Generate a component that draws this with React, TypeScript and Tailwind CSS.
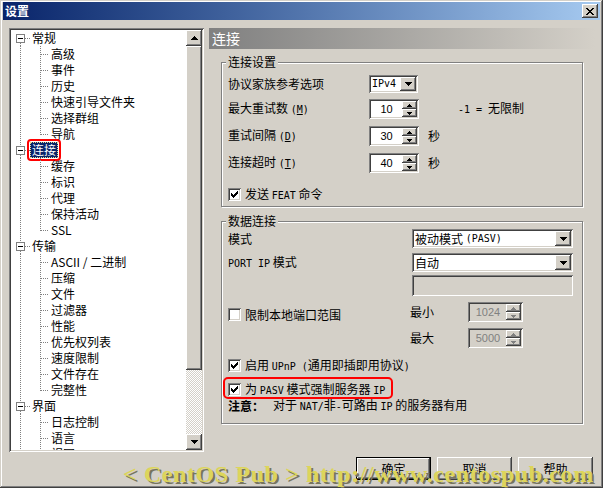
import React from "react";

const raised =
  "shadow-[inset_-1px_-1px_#404040,inset_1px_1px_#fff,inset_-2px_-2px_#808080,inset_2px_2px_#d4d0c8]";
const sunken =
  "shadow-[inset_1px_1px_#808080,inset_-1px_-1px_#fff,inset_2px_2px_#404040,inset_-2px_-2px_#d4d0c8]";

type TreeItem = { label: string; root?: boolean; first?: boolean; last?: boolean; selected?: boolean };

const tree: TreeItem[] = [
  { label: "常规", root: true, first: true },
  { label: "高级" },
  { label: "事件" },
  { label: "历史" },
  { label: "快速引导文件夹" },
  { label: "选择群组" },
  { label: "导航", last: true },
  { label: "连接", root: true, selected: true },
  { label: "缓存" },
  { label: "标识" },
  { label: "代理" },
  { label: "保持活动" },
  { label: "SSL", last: true },
  { label: "传输", root: true },
  { label: "ASCII / 二进制" },
  { label: "压缩" },
  { label: "文件" },
  { label: "过滤器" },
  { label: "性能" },
  { label: "优先权列表" },
  { label: "速度限制" },
  { label: "文件存在" },
  { label: "完整性", last: true },
  { label: "界面", root: true },
  { label: "日志控制" },
  { label: "语言" },
  { label: "视图" },
];

// SimSun-like half-width latin
function L({ children }: { children: React.ReactNode }) {
  return <span className="font-['DejaVu_Sans_Mono',monospace] text-[10px]">{children}</span>;
}

function Tri({ up, small, gray }: { up?: boolean; small?: boolean; gray?: boolean }) {
  const fill = gray ? "#808080" : "#000";
  if (small) {
    return (
      <svg width="5" height="3" viewBox="0 0 5 3" shapeRendering="crispEdges">
        <path d={up ? "M2 0h1v1h1v1h1v1H0V2h1V1h1z" : "M0 0h5v1H4v1H3v1H2V2H1V1H0z"} fill={fill} />
      </svg>
    );
  }
  return (
    <svg width="7" height="4" viewBox="0 0 7 4" shapeRendering="crispEdges">
      <path
        d={up ? "M3 0h1v1h1v1h1v1h1v1H0V3h1V2h1V1h1z" : "M0 0h7v1H6v1H5v1H4v1H3V3H2V2H1V1H0z"}
        fill={fill}
      />
    </svg>
  );
}

function Check({ checked }: { checked?: boolean }) {
  return (
    <span className={`flex h-[13px] w-[13px] shrink-0 items-center justify-center bg-white ${sunken}`}>
      {checked && (
        <svg width="7" height="7" viewBox="0 0 7 7" shapeRendering="crispEdges">
          <path d="M6 0h1v3H6v1H5v1H4v1H3v1H2V6H1V5H0V2h1v1h1v1h1V3h1V2h1V1h1z" fill="#000" />
        </svg>
      )}
    </span>
  );
}

function Combo({ className, children }: { className: string; children: React.ReactNode }) {
  return (
    <div className={`flex shrink-0 bg-white p-[2px] ${sunken} ${className}`}>
      <div className="flex flex-1 items-center overflow-hidden whitespace-pre pl-[1px]">{children}</div>
      <div className={`flex w-[16px] items-center justify-center bg-[#d4d0c8] ${raised}`}>
        <Tri />
      </div>
    </div>
  );
}

function Spin({ value, disabled, className }: { value: string; disabled?: boolean; className: string }) {
  return (
    <div
      className={`flex shrink-0 p-[2px] ${sunken} ${className} ${
        disabled ? "bg-[#d4d0c8] text-[#808080]" : "bg-white text-black"
      }`}
    >
      <div className="flex flex-1 items-center justify-center font-['Liberation_Sans',sans-serif] text-[11px]">
        {value}
      </div>
      <div className="flex w-[15px] flex-col">
        <div className={`flex h-[8px] items-center justify-center bg-[#d4d0c8] ${raised}`}>
          <Tri up small gray={disabled} />
        </div>
        <div className={`flex flex-1 items-center justify-center bg-[#d4d0c8] ${raised}`}>
          <Tri small gray={disabled} />
        </div>
      </div>
    </div>
  );
}

function TreeRow({ item }: { item: TreeItem }) {
  if (item.root) {
    return (
      <div className="flex h-[16px] shrink-0 items-center whitespace-nowrap">
        <svg width="19" height="16" className="shrink-0" shapeRendering="crispEdges">
          {!item.first && <line x1="9.5" y1="0" x2="9.5" y2="4" stroke="#808080" strokeDasharray="1 1" />}
          <line x1="9.5" y1="13" x2="9.5" y2="16" stroke="#808080" strokeDasharray="1 1" />
          <line x1="14" y1="8.5" x2="19" y2="8.5" stroke="#808080" strokeDasharray="1 1" />
          <rect x="5.5" y="4.5" width="8" height="8" fill="#fff" stroke="#808080" />
          <line x1="7" y1="8.5" x2="12" y2="8.5" stroke="#000" />
        </svg>
        {item.selected ? (
          <span className="-my-[4px] -ml-[3px] inline-flex rounded-[4px] border-2 border-[#ff0000] p-[1px]">
            <span className="border border-dotted border-[#e8d890] bg-[#0a246a] px-[1px] leading-[14px] text-white">
              {item.label}
            </span>
          </span>
        ) : (
          <span className="pl-[2px]">{item.label}</span>
        )}
      </div>
    );
  }
  return (
    <div className="flex h-[16px] shrink-0 items-center whitespace-nowrap">
      <svg width="40" height="16" className="shrink-0" shapeRendering="crispEdges">
        <line x1="9.5" y1="0" x2="9.5" y2="16" stroke="#808080" strokeDasharray="1 1" />
        <line x1="29.5" y1="0" x2="29.5" y2={item.last ? 9 : 16} stroke="#808080" strokeDasharray="1 1" />
        <line x1="30" y1="8.5" x2="38" y2="8.5" stroke="#808080" strokeDasharray="1 1" />
      </svg>
      <span>{item.label}</span>
    </div>
  );
}

function Tree() {
  return (
    <div className={`flex h-[424px] w-[195px] shrink-0 bg-white p-[2px] ${sunken}`}>
      <div className="flex flex-1 flex-col overflow-hidden">
        {tree.map((item) => (
          <TreeRow key={item.label} item={item} />
        ))}
      </div>
      <div className="flex w-[16px] flex-col">
        <div className={`flex h-[16px] items-center justify-center bg-[#d4d0c8] ${raised}`}>
          <Tri up />
        </div>
        <div className={`h-[324px] bg-[#d4d0c8] ${raised}`} />
        <div className="flex-1 bg-[repeating-conic-gradient(#d4d0c8_0_25%,#fff_0_50%)] bg-[length:2px_2px]" />
        <div className={`flex h-[16px] items-center justify-center bg-[#d4d0c8] ${raised}`}>
          <Tri />
        </div>
      </div>
    </div>
  );
}

function Button({ children, isDefault }: { children: React.ReactNode; isDefault?: boolean }) {
  return (
    <div
      className={`flex h-[23px] w-[75px] items-center justify-center bg-[#d4d0c8] ${raised} ${
        isDefault ? "border border-black" : ""
      }`}
    >
      {children}
    </div>
  );
}

export default function App() {
  return (
    <div className="relative flex h-[488px] w-[603px] flex-col overflow-hidden bg-[#d4d0c8] px-[3px] pt-[2px] font-['Noto_Sans_CJK_SC',sans-serif] text-[12px] leading-[12px] text-black shadow-[inset_-1px_-1px_#404040,inset_1px_1px_#d4d0c8,inset_-2px_-2px_#808080,inset_2px_2px_#fff]">
      {/* title bar */}
      <div className="flex h-[18px] shrink-0 items-center justify-between bg-linear-to-r from-[#0a246a] to-[#a6caf0] pl-[2px] pr-[2px]">
        <span className="font-bold text-white">设置</span>
        <div className={`flex h-[14px] w-[16px] items-center justify-center bg-[#d4d0c8] ${raised}`}>
          <svg width="8" height="7" viewBox="0 0 8 7" shapeRendering="crispEdges">
            <path
              d="M0 0h2v1h1v1h2V1h1V0h2v1H7v1H6v1H5v1h1v1h1v1h1v1H6V6H5V5H3v1H2v1H0V6h1V5h1V4h1V3H2V2H1V1H0z"
              fill="#000"
            />
          </svg>
        </div>
      </div>

      <div className="mt-[8px] flex gap-[5px] pl-[6px]">
        <Tree />

        <div className="flex w-[386px] flex-col">
          <div className="h-[21px] bg-linear-to-r from-[#808080] to-[#d4d0c8] pl-[3px] text-[14px] leading-[21px] text-white">
            连接
          </div>

          {/* 连接设置 */}
          <fieldset className="mx-[12px] mt-[7px] border border-[#808080] p-0 shadow-[inset_1px_1px_#fff,1px_1px_#fff]">
            <legend className="ml-[4px] bg-[#d4d0c8] px-[2px] leading-[12px]">连接设置</legend>
            <div className="flex flex-col pb-[5px] pl-[6px] pt-[7px]">
              <div className="flex h-[18px] items-center">
                <span className="w-[141px] shrink-0">协议家族参考选项</span>
                <Combo className="h-[18px] w-[49px]">
                  <L>IPv4</L>
                </Combo>
              </div>
              <div className="mt-[6px] flex h-[20px] items-center">
                <span className="w-[141px] shrink-0 whitespace-pre">
                  最大重试数 <L>(<u>M</u>)</L>
                </span>
                <Spin value="10" className="h-[20px] w-[50px]" />
                <span className="ml-[39px] whitespace-pre">
                  <L>-1 = </L>无限制
                </span>
              </div>
              <div className="mt-[7px] flex h-[20px] items-center">
                <span className="w-[141px] shrink-0 whitespace-pre">
                  重试间隔 <L>(<u>D</u>)</L>
                </span>
                <Spin value="30" className="h-[20px] w-[50px]" />
                <span className="ml-[9px]">秒</span>
              </div>
              <div className="mt-[7px] flex h-[20px] items-center">
                <span className="w-[141px] shrink-0 whitespace-pre">
                  连接超时 <L>(<u>T</u>)</L>
                </span>
                <Spin value="40" className="h-[20px] w-[50px]" />
                <span className="ml-[9px]">秒</span>
              </div>
              <div className="mt-[15px] flex h-[13px] items-center gap-[4px]">
                <Check checked />
                <span className="whitespace-pre">
                  发送 <L>FEAT</L> 命令
                </span>
              </div>
            </div>
          </fieldset>

          {/* 数据连接 */}
          <fieldset className="mx-[12px] mt-[8px] border border-[#808080] p-0 shadow-[inset_1px_1px_#fff,1px_1px_#fff]">
            <legend className="ml-[4px] bg-[#d4d0c8] px-[2px] leading-[12px]">数据连接</legend>
            <div className="flex flex-col pb-[11px] pl-[6px] pt-[2px]">
              <div className="flex h-[19px] items-center">
                <span className="w-[184px] shrink-0">模式</span>
                <Combo className="h-[19px] w-[161px]">
                  被动模式 <L>(PASV)</L>
                </Combo>
              </div>
              <div className="mt-[5px] flex h-[19px] items-center">
                <span className="w-[184px] shrink-0 whitespace-pre">
                  <L>PORT IP</L> 模式
                </span>
                <Combo className="h-[19px] w-[161px]">自动</Combo>
              </div>
              <div className={`ml-[184px] mt-[3px] h-[21px] w-[161px] bg-[#d4d0c8] ${sunken}`} />
              <div className="mt-[6px] flex h-[20px] items-start">
                <div className="mt-[6px] flex w-[182px] shrink-0 items-center gap-[4px]">
                  <Check />
                  <span>限制本地端口范围</span>
                </div>
                <span className="w-[58px] shrink-0 leading-[20px]">最小</span>
                <Spin value="1024" disabled className="h-[20px] w-[55px]" />
              </div>
              <div className="mt-[6px] flex h-[20px] items-center pl-[182px]">
                <span className="w-[58px] shrink-0">最大</span>
                <Spin value="5000" disabled className="h-[20px] w-[55px]" />
              </div>
              <div className="mt-[11px] flex h-[13px] items-center gap-[4px]">
                <Check checked />
                <span className="whitespace-pre">
                  启用 <L>UPnP (</L>通用即插即用协议<L>)</L>
                </span>
              </div>
              <div className="-mb-[2px] -ml-[5px] mt-[5px] flex w-fit items-center gap-[4px] rounded-[5px] border-2 border-[#ff0000] pl-[3px] pr-[6px] pt-[3px]">
                <Check checked />
                <span className="whitespace-pre leading-[13px]">
                  为 <L>PASV</L> 模式强制服务器 <L>IP</L>
                </span>
              </div>
              <div className="mt-[3px] flex h-[12px] items-center whitespace-pre">
                <span className="font-bold">注意：</span>
                <span className="ml-[9px]">
                  对于 <L>NAT/</L>非<L>-</L>可路由 <L>IP</L> 的服务器有用
                </span>
              </div>
            </div>
          </fieldset>
        </div>
      </div>

      <div className="mt-[5px] flex justify-end gap-[6px] pr-[7px]">
        <Button isDefault>确定</Button>
        <Button>取消</Button>
        <Button>帮助</Button>
      </div>

      {/* watermark over the dialog */}
      <div className="pointer-events-none absolute left-[123px] top-[462px] whitespace-nowrap font-['Liberation_Serif',serif] text-[24px] font-bold leading-[24px] tracking-[0.6px] text-[#ddd55a] [text-shadow:2px_2px_0_#77755e]">
        &lt; CentOS Pub &gt; http://www.centospub.com
      </div>
    </div>
  );
}
